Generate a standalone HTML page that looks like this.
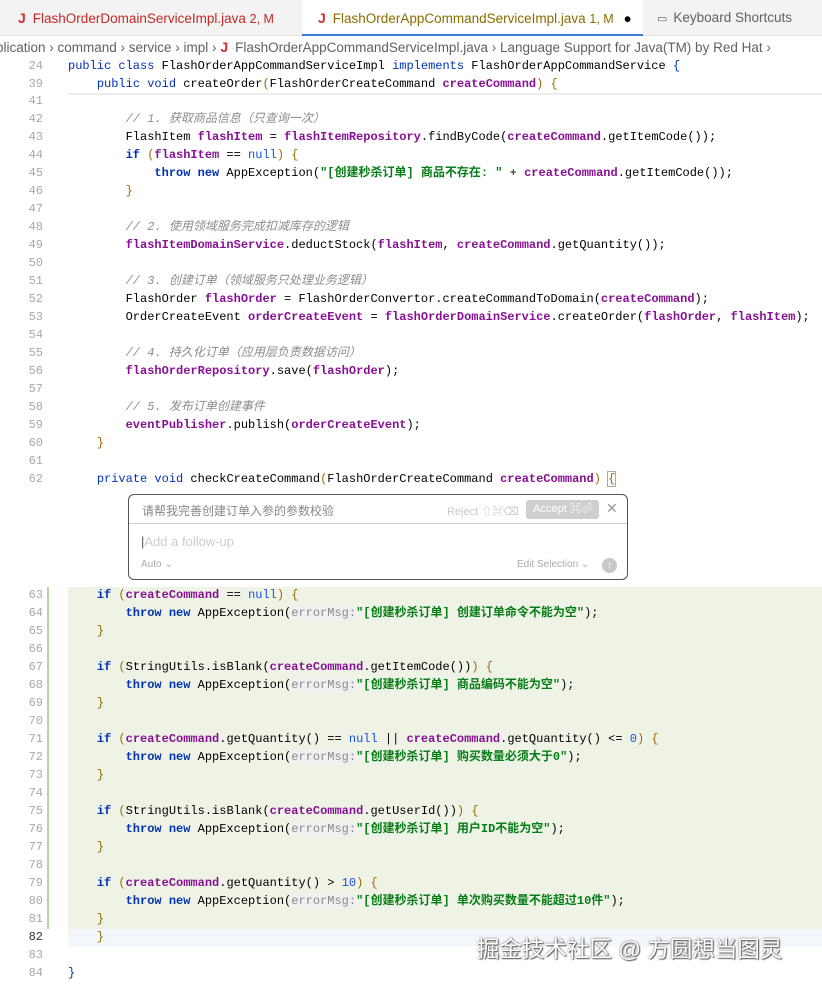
<!DOCTYPE html>
<html><head><meta charset="utf-8"><style>
*{margin:0;padding:0;box-sizing:border-box}
body{width:822px;height:988px;background:#fff;position:relative;overflow:hidden;font-family:"Liberation Sans","Noto Sans CJK SC",sans-serif}
.tabs{position:absolute;left:0;top:0;width:822px;height:36px;background:#f3f3f3;border-bottom:1px solid #e5e5e5}
.tab{position:absolute;top:0;height:36px;line-height:36px;font-size:13.5px;white-space:nowrap}
.bc{position:absolute;top:37px;left:0;height:20px;line-height:20px;font-size:13.5px;color:#616161;white-space:nowrap}
.J{color:#d32f2f;font-weight:bold;font-size:14px;margin-right:7px}
.ln{position:absolute;left:0;width:43px;text-align:right;font:12px "Liberation Mono",monospace;color:#a8a8a8;height:18px;line-height:18px}
.c{position:absolute;left:68px;font:12px "Liberation Mono","Noto Sans CJK SC",monospace;color:#000;height:18px;line-height:18px;white-space:pre}
.k{color:#0033b3}
.kb{color:#0033b3;font-weight:bold}
.f{color:#871094;font-weight:bold}
.s{color:#067d17;font-weight:bold}
.cm{color:#8c8c8c;font-style:italic}
.n{color:#1750eb}
.p{color:#9b6b00}
.h{color:#8a8a8a;background:#f0f0f0}
</style></head><body>
<div class="tabs">
<div class="tab" style="left:0;width:300px;padding-left:18px;color:#c62828"><span class="J">J</span>FlashOrderDomainServiceImpl.java <span style="font-size:12.5px">2, M</span></div>
<div class="tab" style="left:302px;width:341px;background:#fff;border-bottom:2px solid #3b7bd6;padding-left:16px;color:#8a6d00"><span class="J">J</span>FlashOrderAppCommandServiceImpl.java <span style="font-size:12.5px">1, M</span> <span style="color:#000;margin-left:6px">●</span></div>
<div class="tab" style="left:657px;color:#616161"><span style="font-size:11px;margin-right:6px">▭</span>Keyboard Shortcuts</div>
</div>
<div class="bc" style="left:-4px">plication › command › service › impl › <span class="J">J</span>FlashOrderAppCommandServiceImpl.java › Language Support for Java(TM) by Red Hat ›</div>

<div style="position:absolute;left:68px;top:587px;width:754px;height:342px;background:#eef3e6"></div>
<div style="position:absolute;left:68px;top:929px;width:754px;height:18px;background:#f3f6fa"></div>
<div style="position:absolute;left:47px;top:587px;width:2px;height:342px;background:#b8d3a8"></div>
<div style="position:absolute;left:68px;top:93px;width:754px;height:2px;background:#eee"></div>

<div class="ln" style="top:57px">24</div><div class="c" style="top:57px"><span class="k">public class</span> FlashOrderAppCommandServiceImpl <span class="k">implements</span> FlashOrderAppCommandService <span class="k">{</span></div>
<div class="ln" style="top:75px">39</div><div class="c" style="top:75px">    <span class="k">public void</span> createOrder<span class="p">(</span>FlashOrderCreateCommand <span class="f">createCommand</span><span class="p">)</span> <span class="p">{</span></div>

<div class="ln" style="top:92px">41</div>
<div class="ln" style="top:110px">42</div><div class="c" style="top:110px">        <span class="cm">// 1. 获取商品信息（只查询一次）</span></div>
<div class="ln" style="top:128px">43</div><div class="c" style="top:128px">        FlashItem <span class="f">flashItem</span> = <span class="f">flashItemRepository</span>.findByCode(<span class="f">createCommand</span>.getItemCode());</div>
<div class="ln" style="top:146px">44</div><div class="c" style="top:146px">        <span class="kb">if</span> <span class="p">(</span><span class="f">flashItem</span> == <span class="n">null</span><span class="p">)</span> <span class="p">{</span></div>
<div class="ln" style="top:164px">45</div><div class="c" style="top:164px">            <span class="kb">throw new</span> AppException(<span class="s">"[创建秒杀订单] 商品不存在: "</span> + <span class="f">createCommand</span>.getItemCode());</div>
<div class="ln" style="top:182px">46</div><div class="c" style="top:182px">        <span class="p">}</span></div>
<div class="ln" style="top:200px">47</div>
<div class="ln" style="top:218px">48</div><div class="c" style="top:218px">        <span class="cm">// 2. 使用领域服务完成扣减库存的逻辑</span></div>
<div class="ln" style="top:236px">49</div><div class="c" style="top:236px">        <span class="f">flashItemDomainService</span>.deductStock(<span class="f">flashItem</span>, <span class="f">createCommand</span>.getQuantity());</div>
<div class="ln" style="top:254px">50</div>
<div class="ln" style="top:272px">51</div><div class="c" style="top:272px">        <span class="cm">// 3. 创建订单（领域服务只处理业务逻辑）</span></div>
<div class="ln" style="top:290px">52</div><div class="c" style="top:290px">        FlashOrder <span class="f">flashOrder</span> = FlashOrderConvertor.createCommandToDomain(<span class="f">createCommand</span>);</div>
<div class="ln" style="top:308px">53</div><div class="c" style="top:308px">        OrderCreateEvent <span class="f">orderCreateEvent</span> = <span class="f">flashOrderDomainService</span>.createOrder(<span class="f">flashOrder</span>, <span class="f">flashItem</span>);</div>
<div class="ln" style="top:326px">54</div>
<div class="ln" style="top:344px">55</div><div class="c" style="top:344px">        <span class="cm">// 4. 持久化订单（应用层负责数据访问）</span></div>
<div class="ln" style="top:362px">56</div><div class="c" style="top:362px">        <span class="f">flashOrderRepository</span>.save(<span class="f">flashOrder</span>);</div>
<div class="ln" style="top:380px">57</div>
<div class="ln" style="top:398px">58</div><div class="c" style="top:398px">        <span class="cm">// 5. 发布订单创建事件</span></div>
<div class="ln" style="top:416px">59</div><div class="c" style="top:416px">        <span class="f">eventPublisher</span>.publish(<span class="f">orderCreateEvent</span>);</div>
<div class="ln" style="top:434px">60</div><div class="c" style="top:434px">    <span class="p">}</span></div>
<div class="ln" style="top:452px">61</div>
<div class="ln" style="top:470px">62</div><div class="c" style="top:470px">    <span class="k">private void</span> checkCreateCommand<span class="p">(</span>FlashOrderCreateCommand <span class="f">createCommand</span><span class="p">)</span> <span class="p" style="outline:1px solid #aaa">{</span></div>

<div style="position:absolute;left:128px;top:494px;width:500px;height:86px;border:1px solid #555;border-radius:6px;background:#fff;font-size:12px">
<div style="height:29px;border-bottom:1px solid #ccc;position:relative">
<span style="position:absolute;left:13px;top:7px;color:#888">请帮我完善创建订单入参的参数校验</span>
<span style="position:absolute;left:318px;top:8px;color:#c8c8c8;font-size:11px">Reject ⇧⌘⌫</span>
<span style="position:absolute;left:397px;top:5px;width:73px;height:19px;background:#cfcfcf;border-radius:3px;color:#fff;font-size:11px;line-height:19px;text-align:center">Accept ⌘⏎</span>
<span style="position:absolute;left:477px;top:5px;color:#999;font-size:14px">✕</span>
</div>
<span style="position:absolute;left:12px;top:39px;color:#ccc;font-size:13px"><span style="color:#555">|</span>Add a follow-up</span>
<span style="position:absolute;left:12px;top:64px;color:#aaa;font-size:10px">Auto ⌄</span>
<span style="position:absolute;left:388px;top:64px;color:#aaa;font-size:10px">Edit Selection ⌄</span>
<span style="position:absolute;left:473px;top:63px;width:15px;height:15px;border-radius:50%;background:#c8c8c8;color:#fff;font-size:10px;line-height:15px;text-align:center">↑</span>
</div>

<div class="ln" style="top:586px">63</div><div class="c" style="top:586px">    <span class="kb">if</span> <span class="p">(</span><span class="f">createCommand</span> == <span class="n">null</span><span class="p">)</span> <span class="p">{</span></div>
<div class="ln" style="top:604px">64</div><div class="c" style="top:604px">        <span class="kb">throw new</span> AppException(<span class="h">errorMsg:</span><span class="s">"[创建秒杀订单] 创建订单命令不能为空"</span>);</div>
<div class="ln" style="top:622px">65</div><div class="c" style="top:622px">    <span class="p">}</span></div>
<div class="ln" style="top:640px">66</div>
<div class="ln" style="top:658px">67</div><div class="c" style="top:658px">    <span class="kb">if</span> <span class="p">(</span>StringUtils.isBlank(<span class="f">createCommand</span>.getItemCode())<span class="p">)</span> <span class="p">{</span></div>
<div class="ln" style="top:676px">68</div><div class="c" style="top:676px">        <span class="kb">throw new</span> AppException(<span class="h">errorMsg:</span><span class="s">"[创建秒杀订单] 商品编码不能为空"</span>);</div>
<div class="ln" style="top:694px">69</div><div class="c" style="top:694px">    <span class="p">}</span></div>
<div class="ln" style="top:712px">70</div>
<div class="ln" style="top:730px">71</div><div class="c" style="top:730px">    <span class="kb">if</span> <span class="p">(</span><span class="f">createCommand</span>.getQuantity() == <span class="n">null</span> || <span class="f">createCommand</span>.getQuantity() &lt;= <span class="n">0</span><span class="p">)</span> <span class="p">{</span></div>
<div class="ln" style="top:748px">72</div><div class="c" style="top:748px">        <span class="kb">throw new</span> AppException(<span class="h">errorMsg:</span><span class="s">"[创建秒杀订单] 购买数量必须大于0"</span>);</div>
<div class="ln" style="top:766px">73</div><div class="c" style="top:766px">    <span class="p">}</span></div>
<div class="ln" style="top:784px">74</div>
<div class="ln" style="top:802px">75</div><div class="c" style="top:802px">    <span class="kb">if</span> <span class="p">(</span>StringUtils.isBlank(<span class="f">createCommand</span>.getUserId())<span class="p">)</span> <span class="p">{</span></div>
<div class="ln" style="top:820px">76</div><div class="c" style="top:820px">        <span class="kb">throw new</span> AppException(<span class="h">errorMsg:</span><span class="s">"[创建秒杀订单] 用户ID不能为空"</span>);</div>
<div class="ln" style="top:838px">77</div><div class="c" style="top:838px">    <span class="p">}</span></div>
<div class="ln" style="top:856px">78</div>
<div class="ln" style="top:874px">79</div><div class="c" style="top:874px">    <span class="kb">if</span> <span class="p">(</span><span class="f">createCommand</span>.getQuantity() &gt; <span class="n">10</span><span class="p">)</span> <span class="p">{</span></div>
<div class="ln" style="top:892px">80</div><div class="c" style="top:892px">        <span class="kb">throw new</span> AppException(<span class="h">errorMsg:</span><span class="s">"[创建秒杀订单] 单次购买数量不能超过10件"</span>);</div>
<div class="ln" style="top:910px">81</div><div class="c" style="top:910px">    <span class="p">}</span></div>
<div class="ln" style="top:928px;color:#333">82</div><div class="c" style="top:928px"><span class="p">    }</span></div>
<div class="ln" style="top:946px">83</div>
<div class="ln" style="top:964px">84</div><div class="c" style="top:964px"><span class="k">}</span></div>

<div style="position:absolute;left:477px;top:932px;font-size:22.5px;color:#fff;text-shadow:0 0 2px #555,1px 1px 1px #666;white-space:nowrap">掘金技术社区 @ 方圆想当图灵</div>
</body></html>
